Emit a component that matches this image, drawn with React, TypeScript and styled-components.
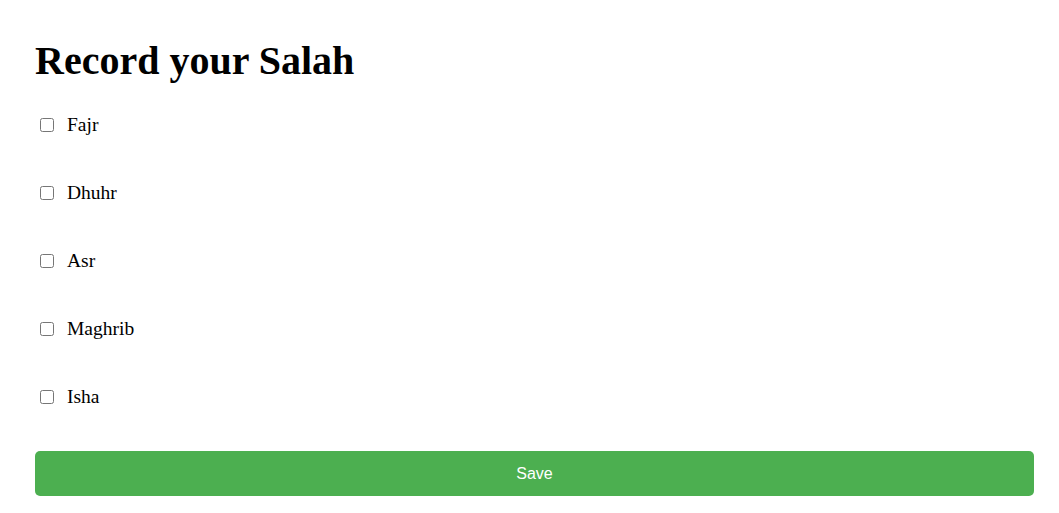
import React from "react";
import styled, { createGlobalStyle } from "styled-components";

const GlobalStyle = createGlobalStyle`
  body {
    margin: 0;
    background: #ffffff;
    font-family: "Liberation Serif", "Times New Roman", serif;
    color: #000000;
  }
`;

const Page = styled.div`
  padding: 39px 25px 0 35px;
`;

const Title = styled.h1`
  font-size: 40px;
  font-weight: bold;
  margin: 0 0 30px 0;
  line-height: 44px;
`;

const List = styled.div`
  display: flex;
  flex-direction: column;
  gap: 45px;
`;

const Row = styled.label`
  display: flex;
  align-items: center;
  height: 23px;
  font-size: 19.5px;
`;

const Check = styled.input`
  width: 14px;
  height: 14px;
  margin: 0 13px 0 5px;
`;

const SaveButton = styled.button`
  display: block;
  width: 100%;
  height: 45px;
  margin-top: 43px;
  border: none;
  border-radius: 5px;
  background: #4caf50;
  color: #ffffff;
  font-family: "Liberation Sans", Arial, sans-serif;
  font-size: 16px;
  cursor: pointer;
`;

const prayers = ["Fajr", "Dhuhr", "Asr", "Maghrib", "Isha"];

export default function App() {
  return (
    <Page>
      <GlobalStyle />
      <Title>Record your Salah</Title>
      <List>
        {prayers.map((p) => (
          <Row key={p}>
            <Check type="checkbox" />
            {p}
          </Row>
        ))}
      </List>
      <SaveButton>Save</SaveButton>
    </Page>
  );
}
